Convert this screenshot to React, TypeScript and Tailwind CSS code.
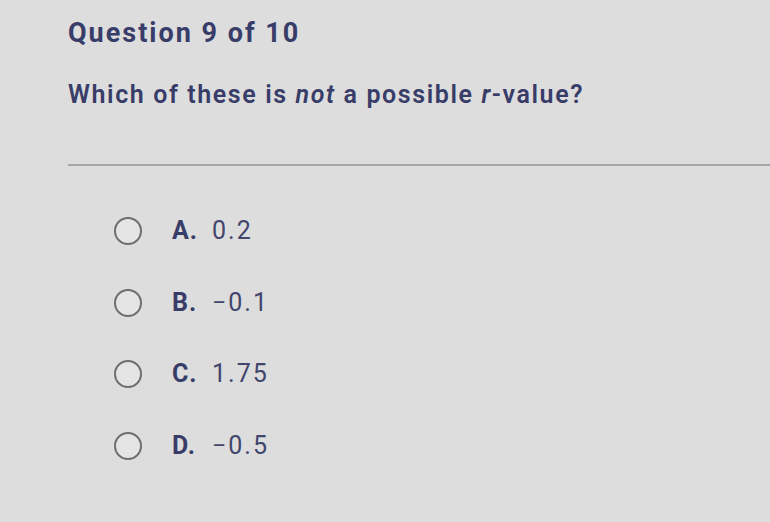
import React from "react";

const OPTIONS = [
  { letter: "A.", value: "0.2" },
  { letter: "B.", value: "−0.1" },
  { letter: "C.", value: "1.75" },
  { letter: "D.", value: "−0.5" },
];

export default function App() {
  return (
    <div
      className="w-[770px] h-[522px] overflow-hidden bg-[#dddddd] text-[#383c68]"
      style={{ fontFamily: "Roboto, 'Liberation Sans', sans-serif" }}
    >
      <div className="pl-[68px] pt-[14px]">
        <h1 className="text-[27px] font-bold leading-[38px] tracking-[2px]">Question 9 of 10</h1>
        <p className="mt-[26px] text-[25px] font-semibold leading-[34px] tracking-[1.6px]">
          Which of these is <i>not</i> a possible <i>r</i>-value?
        </p>
        <div className="mt-[52px] h-[2px] bg-[#a6a6a9]" />
      </div>

      {/* Answer choices */}
      <div className="flex flex-col gap-[43.5px] pl-[114px] pt-[51px]">
        {OPTIONS.map((o) => (
          <div key={o.letter} className="flex items-center h-[28px]">
            <span className="w-[28px] h-[28px] rounded-full border-[2.5px] border-[#6e6e72] bg-[#e4e4e4]" />
            <span className="ml-[30px] w-[40px] text-[25px] font-bold tracking-[1px]">{o.letter}</span>
            <span className="text-[25px] tracking-[2px] text-[#42456c]">{o.value}</span>
          </div>
        ))}
      </div>
    </div>
  );
}
